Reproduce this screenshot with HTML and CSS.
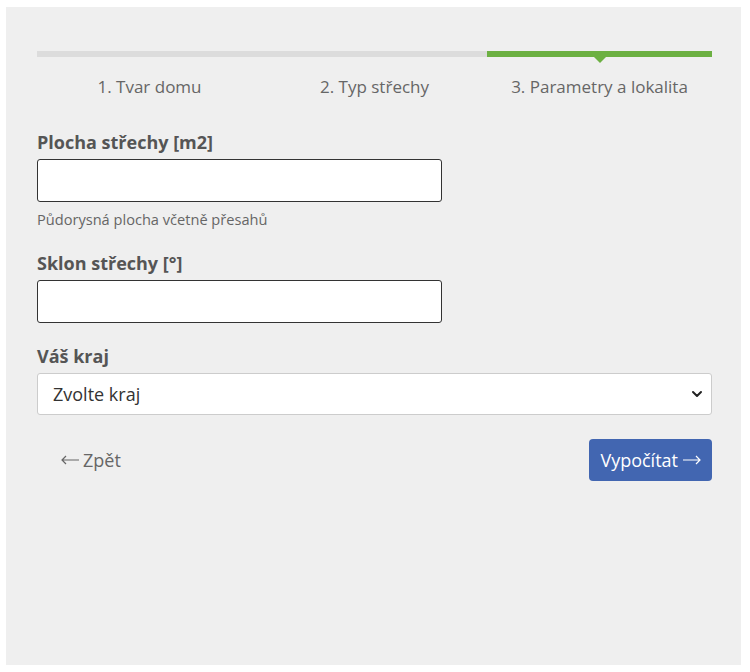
FILE: index.html
```html
<!DOCTYPE html>
<html lang="cs">
<head>
<meta charset="utf-8">
<title>Kalkulačka střechy</title>
<link rel="stylesheet" href="styles.css">
</head>
<body>
<div class="panel">
  <div class="steps">
    <div class="step"><div class="step-bar"></div><div class="step-label">1. Tvar domu</div></div>
    <div class="step"><div class="step-bar"></div><div class="step-label">2. Typ střechy</div></div>
    <div class="step active"><div class="step-bar"></div><div class="step-label">3. Parametry a lokalita</div></div>
  </div>

  <form class="form">
    <div class="field">
      <label class="field-label" for="plocha">Plocha střechy [m2]</label>
      <input class="text-input" id="plocha" type="text">
      <div class="hint">Půdorysná plocha včetně přesahů</div>
    </div>
    <div class="field field-mid">
      <label class="field-label" for="sklon">Sklon střechy [°]</label>
      <input class="text-input" id="sklon" type="text">
    </div>
    <div class="field field-last">
      <label class="field-label" for="kraj">Váš kraj</label>
      <div class="select">
        <span class="select-text">Zvolte kraj</span>
        <svg class="chevron" width="12" height="8" viewBox="0 0 12 8"><polyline points="2,2 6,6 10,2" fill="none" stroke="#222" stroke-width="2" stroke-linecap="round" stroke-linejoin="round"/></svg>
      </div>
    </div>
    <div class="actions">
      <span class="back"><svg class="arrow" width="19" height="10" viewBox="0 0 19 10"><path d="M1 5H18M5 1L1 5L5 9" fill="none" stroke="currentColor" stroke-width="1.2"/></svg>Zpět</span>
      <span class="submit">Vypočítat<svg class="arrow" width="19" height="10" viewBox="0 0 19 10"><path d="M1 5H18M14 1L18 5L14 9" fill="none" stroke="currentColor" stroke-width="1.2"/></svg></span>
    </div>
  </form>
</div>
</body>
</html>
```

FILE: styles.css
```css
html, body {
  margin: 0;
  padding: 0;
  background: #ffffff;
}
body {
  font-family: "Open Sans", "Liberation Sans", sans-serif;
}
.panel {
  box-sizing: border-box;
  width: 735px;
  height: 658px;
  margin: 7px 0 0 6px;
  background: #efefef;
  padding: 44px 29px 0 31px;
}
.steps {
  display: grid;
  grid-template-columns: 1fr 1fr 1fr;
}
.step-bar {
  height: 6px;
  background: #dcdcdc;
  position: relative;
}
.step.active .step-bar {
  background: #6cb042;
}
.step.active .step-bar::after {
  content: "";
  position: absolute;
  left: 50%;
  top: 6px;
  margin-left: -6px;
  border-left: 6px solid transparent;
  border-right: 6px solid transparent;
  border-top: 6px solid #6cb042;
}
.step-label {
  text-align: center;
  font-size: 17px;
  line-height: 24px;
  color: #666;
  padding-top: 18px;
}
.form {
  margin-top: 31px;
}
.field {
  margin-bottom: 22px;
}
.field-mid {
  margin-bottom: 21px;
}
.field-last {
  margin-bottom: 0;
}
.field-label {
  display: block;
  font-weight: 700;
  font-size: 18px;
  line-height: 24px;
  color: #555;
  margin-bottom: 5px;
}
.text-input {
  display: block;
  box-sizing: border-box;
  width: 405px;
  height: 43px;
  border: 1px solid #333;
  border-radius: 3px;
  background: #fff;
  margin: 0;
}
.hint {
  font-size: 14.6px;
  line-height: 19px;
  color: #666;
  margin-top: 8px;
}
.select {
  box-sizing: border-box;
  height: 42px;
  border: 1px solid #ccc;
  border-radius: 3px;
  background: #fff;
  display: flex;
  align-items: center;
  justify-content: space-between;
  padding: 0 8px 0 15px;
}
.select-text {
  font-size: 18px;
  color: #333;
}
.actions {
  display: flex;
  justify-content: space-between;
  align-items: center;
  margin-top: 24px;
}
.back {
  display: flex;
  align-items: center;
  gap: 3px;
  font-size: 18px;
  color: #666;
  padding-left: 24px;
}
.submit {
  box-sizing: border-box;
  height: 42px;
  display: flex;
  align-items: center;
  gap: 4px;
  padding: 0 11px;
  background: #4266b1;
  color: #fff;
  font-size: 18px;
  border-radius: 4px;
}
.arrow {
  display: block;
}
```
